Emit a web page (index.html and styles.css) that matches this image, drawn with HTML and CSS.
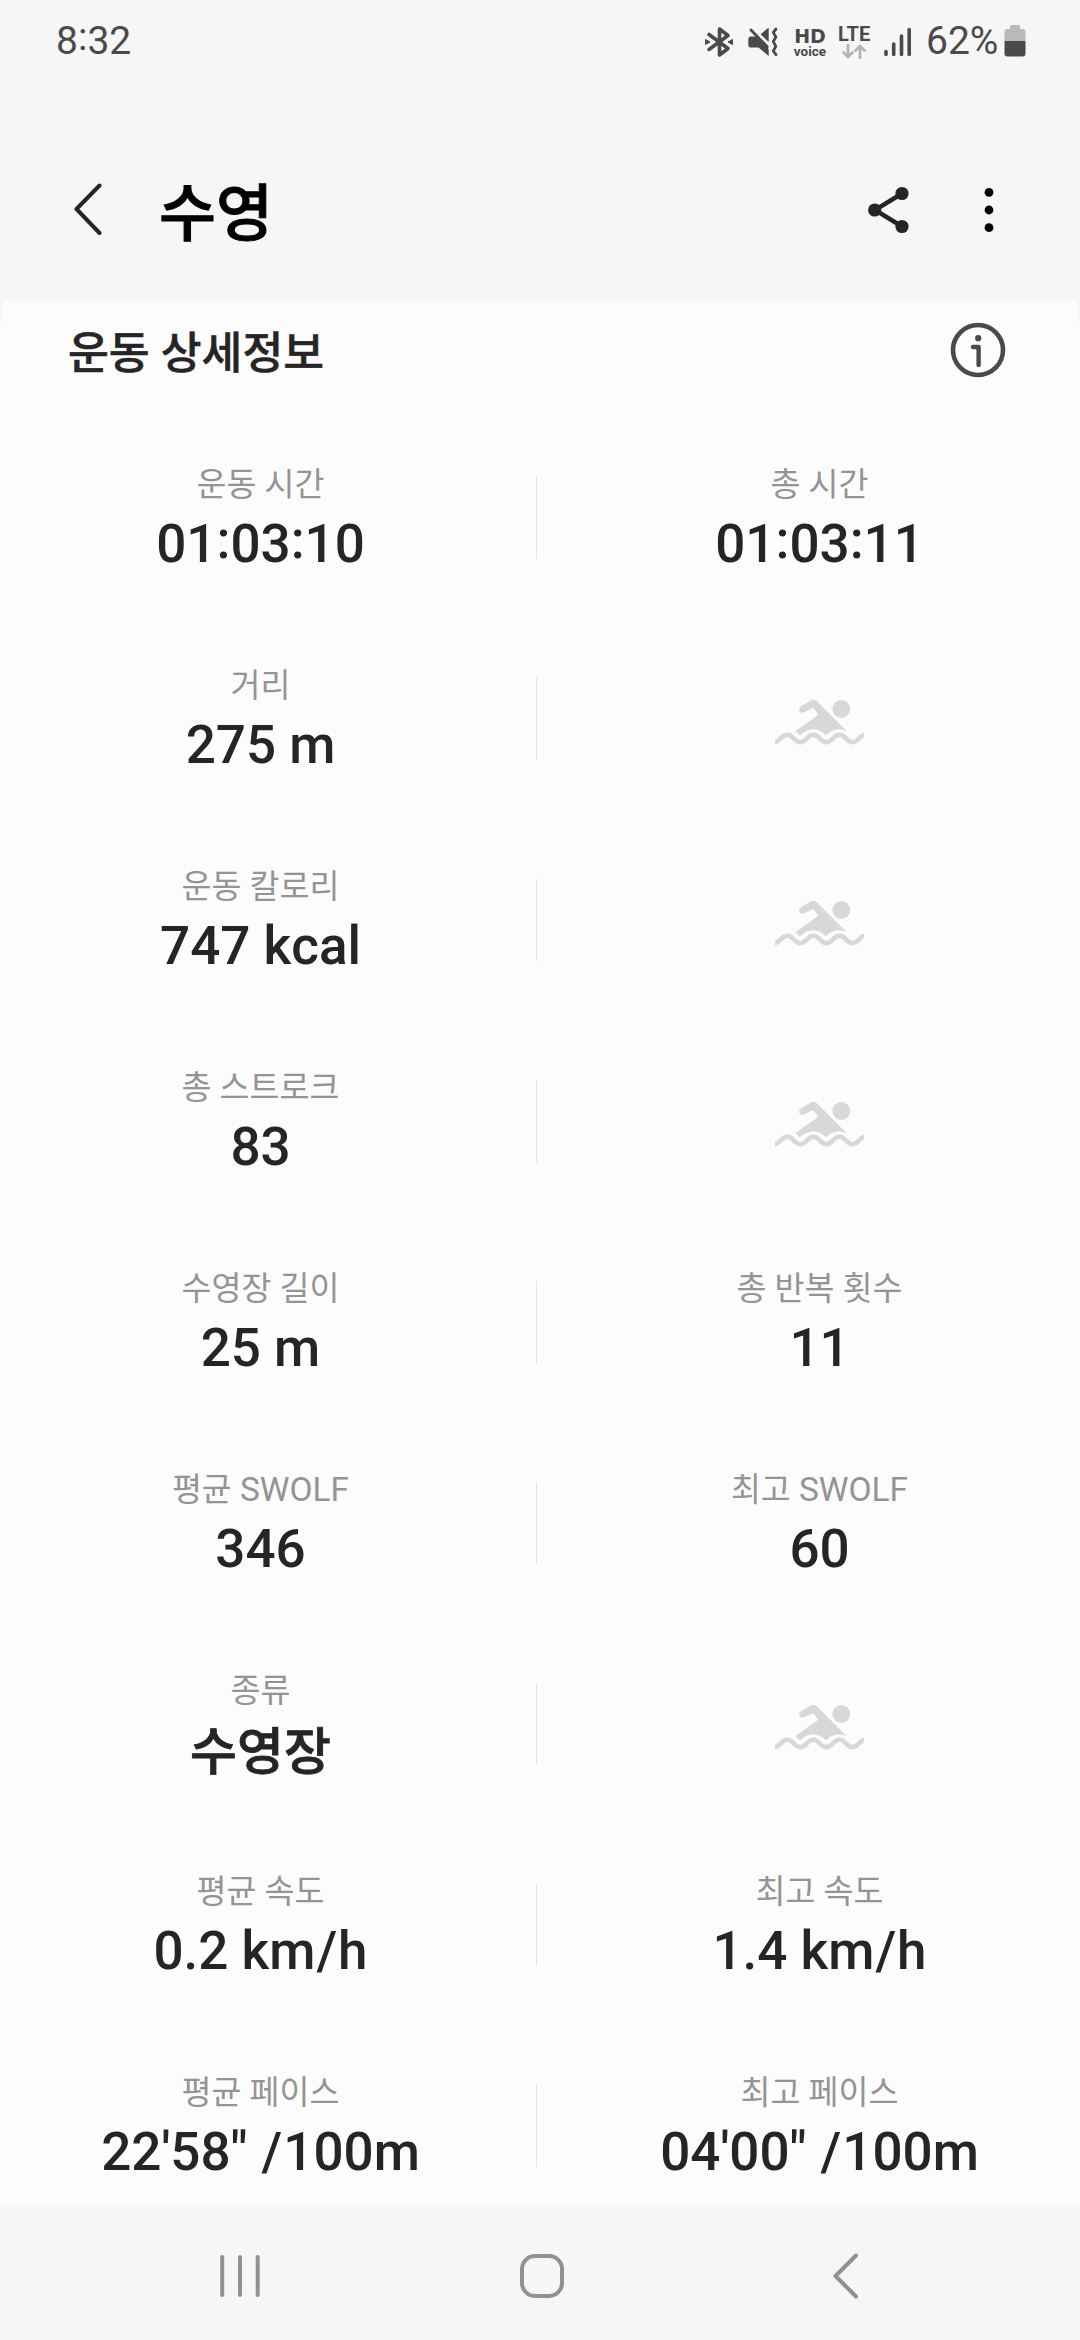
FILE: index.html
```html
<!DOCTYPE html>
<html lang="ko">

<head>
  <meta charset="UTF-8">
  <title>수영</title>
  <link rel="stylesheet" href="styles.css">
</head>
<body>
  <!-- shared swimmer placeholder -->
  <svg class="defs" width="0" height="0">
    <symbol id="swim" viewBox="0 0 89 46">
      <circle cx="66.3" cy="10" r="8.9"/>
      <path d="M36.7 1.1Q39.300 0 41.300 1.800L71.500 31.900Q60 27 51 36.300Q38 24 25 36.300L20.300 32.300L43.300 15.700L38.300 9L28.500 13.500Q25.300 14.500 24.200 11.500Q23.600 9 26 7.300Z"/>
      <path d="M-1 43.200C5 43.200 6 35.800 12.300 35.800S19 43.200 25.300 43.200S32 35.800 38.300 35.800S45 43.200 51.300 43.200S58 35.800 64.500 35.800S71 43.200 77.500 43.200S84 35.800 90 35.800" fill="none" stroke="#d8d8d8" stroke-width="4.600"/>
    </symbol>
  </svg>

  <div class="status-bar">
    <span class="clock">8<span class="colon">:</span>32</span>
    <div class="indicators">
      <svg class="bluetooth" width="28" height="32" viewBox="0 0 28 32">
        <path d="M4 8.500L23 22.500L14.500 29V3L23 9.500L4 23.500" fill="none" stroke="#4a4a4a" stroke-width="3.600" stroke-linejoin="round" stroke-linecap="round"/>
        <path d="M.5 13.500L5 16L.5 18.500ZM27.500 13.500L23 16L27.500 18.500Z" fill="#4a4a4a" stroke="#4a4a4a" stroke-linejoin="round"/>
      </svg>
      <svg class="mute" width="30" height="30" viewBox="0 0 30 30">
        <path d="M12.500 7.300L20.700 .5V15ZM2.500 9.500H8L20.700 22V29L10.500 20.500H2.500Q.3 20.500 .3 18V12Q.3 9.500 2.500 9.500Z" fill="#4a4a4a"/>
        <path d="M3 3L19.300 19.800" stroke="#4a4a4a" stroke-width="2.800" stroke-linecap="round"/>
        <path d="M28 2L25.300 5.300L27.800 10L25.300 14.700L27.800 19.300L25.300 24L28 27.800" fill="none" stroke="#4a4a4a" stroke-width="2.800" stroke-linecap="round" stroke-linejoin="round"/>
      </svg>
      <div class="hd"><b>HD</b><span>voice</span></div>
      <div class="lte">
        <span>LTE</span>
        <svg width="24" height="15" viewBox="0 0 24 15">
          <path d="M6 1V13M1.500 8.500L6 13L10.500 8.500M18 14V2M13.500 6.500L18 2L22.500 6.500" fill="none" stroke="#b4b4b4" stroke-width="2.700" stroke-linecap="round" stroke-linejoin="round"/>
        </svg>
      </div>
      <svg class="signal" width="28" height="30" viewBox="0 0 28 30">
        <path d="M2 24.500V27.500M9.700 17V27.500M17.500 9V27.500M25.200 2.500V27.500" stroke="#4a4a4a" stroke-width="3.600" stroke-linecap="round"/>
      </svg>
      <span class="percent">62%</span>
      <svg class="battery" width="22" height="32" viewBox="0 0 22 32">
        <path d="M7 0H15Q16 0 16 1V4H18.500Q21.500 4 21.500 7V16H.5V7Q.5 4 3.500 4H6V1Q6 0 7 0Z" fill="#b9b9b9"/>
        <path d="M.5 16H21.500V28.500Q21.500 31.500 18.500 31.500H3.500Q.5 31.500 .5 28.500Z" fill="#4a4a4a"/>
      </svg>
    </div>
  </div>

  <header class="app-bar">
    <svg class="back" width="30" height="54" viewBox="0 0 30 54">
      <path d="M26.500 2.500L3.500 26L26.500 50" fill="none" stroke="#252525" stroke-width="4" stroke-linecap="round" stroke-linejoin="round"/>
    </svg>
    <h1>수영</h1>
    <svg class="share" width="42" height="48" viewBox="0 0 42 48">
      <path d="M34 7.500L7 24L34 40.500" fill="none" stroke="#252525" stroke-width="4.400"/>
      <g fill="#252525">
        <circle cx="34" cy="7.500" r="6.600"/>
        <circle cx="6.700" cy="24" r="6.600"/>
        <circle cx="34" cy="40.500" r="6.600"/>
      </g>
    </svg>
    <svg class="more" width="10" height="46" viewBox="0 0 10 46">
      <circle cx="5" cy="5.300" r="4.400"/>
      <circle cx="5" cy="23" r="4.400"/>
      <circle cx="5" cy="40.700" r="4.400"/>
    </svg>
  </header>

  <main class="card">
    <div class="card-head">
      <h2>운동 상세정보</h2>
      <svg width="56" height="56" viewBox="0 0 56 56" fill="none" stroke="#4a4a4a">
        <circle cx="28" cy="28" r="25" stroke-width="4.600"/>
        <path d="M23 25H28.600V43" stroke-width="4.400" stroke-linecap="round" stroke-linejoin="round"/>
        <circle cx="28.200" cy="16.200" r="3.100" fill="#4a4a4a" stroke="none"/>
      </svg>
    </div>

    <div class="row">
      <div class="cell"><span class="label">운동 시간</span><span class="value">01<span class="colon">:</span>03<span class="colon">:</span>10</span></div>
      <div class="cell"><span class="label">총 시간</span><span class="value">01<span class="colon">:</span>03<span class="colon">:</span>11</span></div>
    </div>
    <div class="row">
      <div class="cell"><span class="label">거리</span><span class="value">275 m</span></div>
      <div class="cell"><svg class="swim"><use href="#swim"/></svg></div>
    </div>
    <div class="row">
      <div class="cell"><span class="label">운동 칼로리</span><span class="value">747 kcal</span></div>
      <div class="cell"><svg class="swim"><use href="#swim"/></svg></div>
    </div>
    <div class="row">
      <div class="cell"><span class="label">총 스트로크</span><span class="value">83</span></div>
      <div class="cell"><svg class="swim"><use href="#swim"/></svg></div>
    </div>
    <div class="row">
      <div class="cell"><span class="label">수영장 길이</span><span class="value">25 m</span></div>
      <div class="cell"><span class="label">총 반복 횟수</span><span class="value">11</span></div>
    </div>
    <div class="row">
      <div class="cell"><span class="label">평균 <span class="latin">SWOLF</span></span><span class="value">346</span></div>
      <div class="cell"><span class="label">최고 <span class="latin">SWOLF</span></span><span class="value">60</span></div>
    </div>
    <div class="row">
      <div class="cell"><span class="label">종류</span><span class="value hangul">수영장</span></div>
      <div class="cell"><svg class="swim"><use href="#swim"/></svg></div>
    </div>
    <div class="row">
      <div class="cell"><span class="label">평균 속도</span><span class="value">0.2 km<span class="slash">/</span>h</span></div>
      <div class="cell"><span class="label">최고 속도</span><span class="value">1.4 km<span class="slash">/</span>h</span></div>
    </div>
    <div class="row">
      <div class="cell"><span class="label">평균 페이스</span><span class="value">22'58" <span class="slash">/</span>100m</span></div>
      <div class="cell"><span class="label">최고 페이스</span><span class="value">04'00" <span class="slash">/</span>100m</span></div>
    </div>
  </main>

  <nav class="nav-bar">
    <svg class="recents" width="42" height="44" viewBox="0 0 42 44">
      <path d="M3.200 3V41M21 3V41M38.700 3V41"/>
    </svg>
    <svg class="home" width="46" height="46" viewBox="0 0 46 46">
      <rect x="3" y="3" width="40" height="40" rx="13"/>
    </svg>
    <svg class="nav-back" width="28" height="46" viewBox="0 0 28 46">
      <path d="M24 2.500L3.500 23L24 43.500"/>
    </svg>
  </nav>
</body>
</html>
```

FILE: styles.css
```css
* {
  box-sizing: border-box;
}
body {
  margin: 0;
  height: 2340px;
  display: flex;
  flex-direction: column;
  overflow: hidden;
  font-family: Roboto, "Noto Sans CJK KR", sans-serif;
  background-color: #f6f6f6;
  color: #252525;
}
svg {
  display: block;
  flex: none;
}
.defs {
  position: absolute;
}
/* times use a raised colon */
.colon {
  line-height: 1;
  vertical-align: 4px;
}

/* status bar */
.status-bar {
  display: flex;
  justify-content: space-between;
  height: 84px;
  padding: 18px 54px 0 56px;
  font-size: 39px;
  line-height: 46px;
  color: #4a4a4a;
}
.indicators {
  display: flex;
  align-items: flex-start;
}
.bluetooth {
  margin-top: 8px;
}
.mute {
  margin: 9px 15px 0 15px;
}
.hd {
  width: 34px;
  margin-top: 9px;
  text-align: center;
}
.hd b {
  display: block;
  font: bold 19px/18px "DejaVu Sans", sans-serif;
}
.hd span {
  display: block;
  font-size: 13.5px;
  font-weight: 700;
  line-height: 13px;
}
.lte {
  width: 34px;
  margin: 6px 12px 0 11px;
}
.lte span {
  display: block;
  font-size: 20px;
  font-weight: 700;
  line-height: 20px;
}
.lte svg {
  margin: 0 0 0 4px;
}
.signal {
  margin: 9px 14px 0 0;
}
.percent {
  width: 70px;
}
.battery {
  margin: 7px 0 0 8px;
}

/* title bar */
.app-bar {
  display: flex;
  align-items: center;
  height: 216px;
  padding: 0 86px 0 73px;
}
.back {
  margin-top: 36px;
}
.app-bar h1 {
  flex: 1;
  margin: 46px 0 0 56px;
  font-size: 62px;
  font-weight: 500;
  line-height: 80px;
  color: #000;
  -webkit-text-stroke: 1px #000;
}
.share {
  margin: 36px 74px 0 0;
}
.more {
  margin-top: 36px;
}

/* workout details */
.card {
  height: 1905px;
  overflow: hidden;
  background-color: #fcfcfc;
  border-radius: 7px 7px 0 0 / 34px 34px 0 0;
}
.card-head {
  display: flex;
  justify-content: space-between;
  height: 118px;
  padding: 22px 74px 0 68px;
}
.card-head h2 {
  margin: 2px 0 0;
  font-size: 44.4px;
  font-weight: 500;
  line-height: 60px;
  -webkit-text-stroke: 0.5px #252525;
}
.row {
  display: flex;
  position: relative;
  justify-content: space-between;
  height: 201px;
}
.row::before {
  content: "";
  position: absolute;
  left: 536px;
  top: 59px;
  width: 1px;
  height: 82px;
  background-color: #e3e3e3;
}
.cell {
  display: flex;
  flex-direction: column;
  align-items: center;
  width: 521px;
  padding-top: 43px;
}
.label {
  font-size: 32.6px;
  line-height: 48px;
  color: #949494;
}
.latin {
  font-size: 33.5px;
}
.value {
  font-size: 53px;
  font-weight: 500;
  line-height: 70px;
  font-kerning: none;
}
.value.hangul {
  padding-top: 3px;
  font-size: 51px;
  -webkit-text-stroke: 0.8px #252525;
}
.slash {
  margin: 0 1px;
}
.swim {
  width: 89px;
  height: 46px;
  margin-top: 37px;
  fill: #d8d8d8;
}

/* system navigation */
.nav-bar {
  display: flex;
  align-items: center;
  flex: 1;
  padding: 6px 0 0 219px;
  fill: none;
  stroke: #919191;
  stroke-width: 4;
  stroke-linecap: round;
  stroke-linejoin: round;
}
.home {
  margin: 0 267px 0 258px;
}
```
